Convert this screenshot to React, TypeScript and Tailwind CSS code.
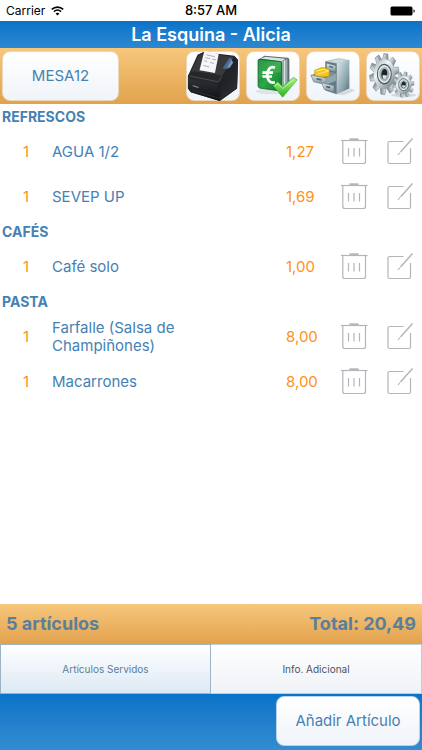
import type { ReactNode } from "react";

type Item = { qty: number; name: string; price: string };
type Section = { title: string; items: Item[] };

const sections: Section[] = [
  {
    title: "REFRESCOS",
    items: [
      { qty: 1, name: "AGUA 1/2", price: "1,27" },
      { qty: 1, name: "SEVEP UP", price: "1,69" },
    ],
  },
  {
    title: "CAFÉS",
    items: [{ qty: 1, name: "Café solo", price: "1,00" }],
  },
  {
    title: "PASTA",
    items: [
      { qty: 1, name: "Farfalle (Salsa de Champiñones)", price: "8,00" },
      { qty: 1, name: "Macarrones", price: "8,00" },
    ],
  },
];

function WifiIcon() {
  return (
    <svg aria-hidden="true" width="13" height="10" viewBox="0 0 13 10" fill="none" stroke="#000" strokeWidth="1.6">
      <path d="M0.8 3.4C4 0.3 9 0.3 12.2 3.4" />
      <path d="M2.9 5.6C5 3.7 8 3.7 10.1 5.6" />
      <path d="M6.5 9.6L4.6 7.5C5.6 6.5 7.4 6.5 8.4 7.5Z" fill="#000" stroke="none" />
    </svg>
  );
}

function BatteryIcon() {
  return (
    <svg aria-hidden="true" width="26" height="10" viewBox="0 0 26 10">
      <rect x="0.5" y="0.5" width="22" height="9" rx="1.5" />
      <path d="M23.5 3.2C25.2 3.6 25.2 6.4 23.5 6.8Z" />
    </svg>
  );
}

function PrinterIcon() {
  return (
    <svg aria-hidden="true" width="54" height="54" viewBox="0 0 54 54">
      <defs>
        <linearGradient id="printer-front" x1="0" y1="0" x2="0" y2="1">
          <stop offset="0" stopColor="#34353a" />
          <stop offset="1" stopColor="#0e0f11" />
        </linearGradient>
        <linearGradient id="printer-side" x1="0" y1="0" x2="1" y2="1">
          <stop offset="0" stopColor="#1b1c1f" />
          <stop offset="1" stopColor="#2c2d32" />
        </linearGradient>
      </defs>
      <path d="M11 5L17 2L49 6L53 10L52 40L34 53L4 44L1 40L1 27Z" fill="#1e1f22" />
      <path d="M12 6L18 3L49 7L36 28L3 25Z" fill="#38393d" />
      <path d="M36 28L50 7L53 11L52 40L34 53Z" fill="url(#printer-side)" />
      <path d="M1 27L32 34L34 53L4 44L1 40Z" fill="url(#printer-front)" />
      <path d="M1 27Q3 22 8 22L33 26Q38 27 36 32L32 36L3 30Z" fill="#26272b" />
      <path d="M3 27L32 33L36 28" stroke="#55575c" strokeWidth="0.8" fill="none" />
      <path d="M18 1L33 4L29 24L13 21Z" fill="#f5f6f7" />
      <path
        d="M20 5L29 7M19 8L24 9M26 9.5L30 10M18 11L21 12M24 13L28 14M17 16L23 17.5"
        stroke="#a2a6aa"
        strokeWidth="0.9"
      />
      <path d="M37 19L44 8L47 9L42 20Z" fill="#4c6b94" />
      <path d="M42 18L46 10L48 13L44 19Z" fill="#7f98b4" />
      <path d="M6 37L12 39" stroke="#9ca0a5" />
      <path d="M5 42L33 50L52 37" stroke="#303136" strokeWidth="0.8" fill="none" />
    </svg>
  );
}

function EuroIcon() {
  return (
    <svg aria-hidden="true" width="54" height="54" viewBox="0 0 54 54">
      <defs>
        <linearGradient id="book" x1="0" y1="0" x2="1" y2="1">
          <stop offset="0" stopColor="#0b7d35" />
          <stop offset="0.5" stopColor="#2da746" />
          <stop offset="1" stopColor="#0a7a2e" />
        </linearGradient>
        <linearGradient id="tick" x1="0" y1="0" x2="0" y2="1">
          <stop offset="0" stopColor="#b5f48a" />
          <stop offset="1" stopColor="#27b51a" />
        </linearGradient>
      </defs>
      <ellipse cx="26" cy="43" rx="17" ry="3" fill="#dfe3e7" />
      <path d="M12 10L18 6L42 8Q44 8 44 11V34L36 41Z" fill="#5a6c70" />
      <path d="M14 9L19 7L40 9L36 12Z" fill="#dbe3e4" />
      <path d="M36 12L42 9V33L36 40Z" fill="#9caeaf" />
      <path d="M39 11V37" stroke="#dfe8e8" />
      <path
        d="M13 9.5L35 12Q36 12 36 14V41Q36 42.5 34 42.5L13 39.5Q11.5 39 11.5 37V11Q11.5 9.5 13 9.5Z"
        fill="url(#book)"
        stroke="#08672a"
        strokeWidth="0.8"
      />
      <path d="M12 10L35 13V23Q22 23 12 30Z" fill="#6cc76c" opacity="0.3" />
      <path d="M29 18.5C19 14 18 37 29 33.5M16 23.5H27M16 27.5H26" stroke="#fff" strokeWidth="2.8" fill="none" />
      <path d="M27 37L32 33L37 38L48 28.5L52 31L37 49Q34 45 27 37Z" fill="url(#tick)" stroke="#39a82c" strokeWidth="0.7" />
      <path d="M29 37L32 35L37 40L48 31" stroke="#d6ffbd" fill="none" opacity="0.7" />
    </svg>
  );
}

function CabinetIcon() {
  return (
    <svg aria-hidden="true" width="54" height="54" viewBox="0 0 54 54">
      <defs>
        <linearGradient id="cabinet-side" x1="0" y1="0" x2="1" y2="1">
          <stop offset="0" stopColor="#dceaed" />
          <stop offset="0.6" stopColor="#8fa8b1" />
          <stop offset="1" stopColor="#54707a" />
        </linearGradient>
        <linearGradient id="cabinet-drawer" x1="0" y1="0" x2="0" y2="1">
          <stop offset="0" stopColor="#d9e4e8" />
          <stop offset="1" stopColor="#7c919b" />
        </linearGradient>
      </defs>
      <path d="M31 46L46 40L50 42L38 47Z" fill="#d6dadd" />
      <path d="M19 12L33 9L44 11L31 14Z" fill="#cfdbdf" stroke="#8ba0a8" strokeWidth="0.6" />
      <path d="M19 12L31 14V46L19 42Z" fill="#657a84" />
      <path d="M31 14L44 11V40L31 46Z" fill="url(#cabinet-side)" />
      <path d="M20 13.5L30 16V23L20 20.5Z" fill="url(#cabinet-drawer)" stroke="#566b75" strokeWidth="0.6" />
      <path d="M23 17L27 18" stroke="#4f626b" strokeWidth="1.5" />
      <path d="M5 26L15 21L30 24V31L20 34Z" fill="#7d909a" />
      <path d="M8 21L16 18L23 20V27L12 29L8 27Z" fill="#f4c51d" stroke="#c18d09" strokeWidth="0.6" />
      <path d="M9 22L17 20L23 22M11 25L22 22" stroke="#fff07a" fill="none" />
      <path d="M4 26L20 29V36L7 33Z" fill="url(#cabinet-drawer)" stroke="#637983" strokeWidth="0.7" />
      <path d="M20 29L30 25V32L20 36Z" fill="#93a7b0" />
      <path d="M10 29L15 30V32L10 31Z" fill="#50636e" />
      <path d="M15 34L28 37V44L18 41Z" fill="url(#cabinet-drawer)" stroke="#667c86" strokeWidth="0.6" />
      <path d="M20 38L24 39" stroke="#3e505a" strokeWidth="1.5" />
    </svg>
  );
}

const teeth = [0, 36, 72, 108, 144, 180, 216, 252, 288, 324];

function Gear() {
  return (
    <>
      {teeth.map((angle) => (
        <path
          key={angle}
          d="M-4 -13L-2.8 -20H2.8L4 -13Z"
          transform={`rotate(${angle})`}
          fill="url(#gear-tooth)"
          stroke="#6b7d84"
          strokeWidth="0.6"
        />
      ))}
      <circle r="14.5" fill="url(#gear-metal)" />
      <circle r="9.5" fill="#e3e8ea" stroke="#4b5b62" strokeWidth="1.4" />
      <circle r="7" fill="#a5b3b8" />
      <ellipse rx="4" ry="5" fill="#1b2428" />
      <path d="M-2 1H4Q3 5 0 5Q-3 4 -2 1Z" fill="#dde3e3" />
    </>
  );
}

function GearsIcon() {
  return (
    <svg aria-hidden="true" width="54" height="54" viewBox="0 0 54 54">
      <defs>
        <linearGradient id="gear-metal" x1="0" y1="0" x2="1" y2="1">
          <stop offset="0" stopColor="#95a5aa" />
          <stop offset="0.35" stopColor="#f2f5f6" />
          <stop offset="0.65" stopColor="#b4c0c4" />
          <stop offset="1" stopColor="#5d6f76" />
        </linearGradient>
        <linearGradient id="gear-tooth" x1="0" y1="0" x2="1" y2="0">
          <stop offset="0" stopColor="#e6ecee" />
          <stop offset="1" stopColor="#73868d" />
        </linearGradient>
      </defs>
      <ellipse cx="38" cy="47" rx="13" ry="2" fill="#d5d9dc" />
      <g transform="translate(18 25) scale(0.76 1.06) rotate(6)">
        <Gear />
      </g>
      <g transform="translate(38 36) scale(0.54 0.66) rotate(12)">
        <Gear />
      </g>
    </svg>
  );
}

function TrashIcon() {
  return (
    <svg aria-hidden="true" width="28" height="28" viewBox="0 0 28 28" fill="none" stroke="#b3b5bb" strokeWidth="1.2">
      <path d="M0 2.5H26.5" />
      <path d="M8.5 1.3H17.5" strokeWidth="2" />
      <path d="M1.8 2.5V23.5Q1.8 25.5 3.8 25.5H22.5Q24.5 25.5 24.5 23.5V2.5" />
      <path d="M7.5 10V18.5M13 10V18.5M18.5 10V18.5" />
    </svg>
  );
}

function EditIcon() {
  return (
    <svg aria-hidden="true" width="28" height="28" viewBox="0 0 28 28" fill="none" stroke="#b3b5bb" strokeWidth="1.2">
      <path d="M17.5 3.5H3.5Q2 3.5 2 5V24Q2 25.5 3.5 25.5H23Q24.5 25.5 24.5 24V10" />
      <path d="M26.5 0.5L14.5 14" strokeWidth="1.5" />
      <path d="M14 14.5L12 17" />
    </svg>
  );
}

function ToolButton({ label, children }: { label: string; children: ReactNode }) {
  return (
    <button
      type="button"
      aria-label={label}
      className="flex h-[50px] w-[54px] items-center justify-center rounded-lg border border-[#ead8b8] bg-linear-to-b from-white to-[#f0f4f9]"
    >
      {children}
    </button>
  );
}

function ItemRow({ item }: { item: Item }) {
  return (
    <li className="flex h-[45px] items-center pr-2 leading-[18px]">
      <span className="w-[52px] text-center text-[#ff9117]">{item.qty}</span>
      <span className="min-w-0 flex-1 pr-[72px]">{item.name}</span>
      <span className="w-[55px] text-[#ff9117]">{item.price}</span>
      <button type="button" aria-label={`Eliminar ${item.name}`} className="mr-[17px]">
        <TrashIcon />
      </button>
      <button type="button" aria-label={`Editar ${item.name}`}>
        <EditIcon />
      </button>
    </li>
  );
}

export default function App() {
  return (
    <div className="flex min-h-screen flex-col bg-white font-['Inter',sans-serif] text-[15px] text-[#4681b4]">
      <div className="grid h-[21px] grid-cols-3 items-center px-1.5 text-xs text-black">
        <span className="flex items-center gap-1.5">
          Carrier <WifiIcon />
        </span>
        <span className="text-center text-[13px] font-medium">8:57 AM</span>
        <span className="flex justify-end">
          <BatteryIcon />
        </span>
      </div>

      <header>
        <h1 className="flex h-[27px] items-center justify-center bg-linear-to-b from-[#0873c9] to-[#2c88d0] text-lg font-semibold text-white">
          La Esquina - Alicia
        </h1>
        <div className="flex h-14 items-center justify-between bg-linear-to-b from-[#f7c77c] to-[#e2a24c] px-0.5">
          <button
            type="button"
            className="h-[50px] w-[117px] rounded-lg border border-[#ead8b8] bg-linear-to-b from-white to-[#f0f4f9]"
          >
            MESA12
          </button>
          <div className="flex gap-1.5">
            <ToolButton label="Imprimir">
              <PrinterIcon />
            </ToolButton>
            <ToolButton label="Cobrar">
              <EuroIcon />
            </ToolButton>
            <ToolButton label="Cajón">
              <CabinetIcon />
            </ToolButton>
            <ToolButton label="Ajustes">
              <GearsIcon />
            </ToolButton>
          </div>
        </div>
      </header>

      <main className="flex-1">
        {sections.map((section) => (
          <section key={section.title}>
            <h2 className="flex h-[25px] items-center px-0.5 text-sm font-bold">{section.title}</h2>
            <ul>
              {section.items.map((item) => (
                <ItemRow key={item.name} item={item} />
              ))}
            </ul>
          </section>
        ))}
      </main>

      <footer>
        <div className="flex h-10 items-center justify-between bg-linear-to-b from-[#f7c77c] to-[#e2a24c] px-1.5 text-lg font-bold text-[#587f9c]">
          <span>5 artículos</span>
          <span>Total: 20,49</span>
        </div>
        <div className="grid h-[50px] grid-cols-2 text-[10px]">
          <button type="button" className="border border-[#9eb3c5] bg-linear-to-b from-white to-[#dce9f4] text-[#5c7d99]">
            Artículos Servidos
          </button>
          <button type="button" className="border border-l-0 border-[#c0ccd8] bg-linear-to-b from-white to-[#eff2f7] text-[#4d5560]">
            Info. Adicional
          </button>
        </div>
        <div className="flex h-14 items-start justify-end bg-linear-to-b from-[#0873c9] to-[#328cd1] px-0.5 pt-0.5">
          <button
            type="button"
            className="h-[50px] w-36 rounded-lg border border-[#b7d2e9] bg-linear-to-b from-white to-[#f0f4f9]"
          >
            Añadir Artículo
          </button>
        </div>
      </footer>
    </div>
  );
}
